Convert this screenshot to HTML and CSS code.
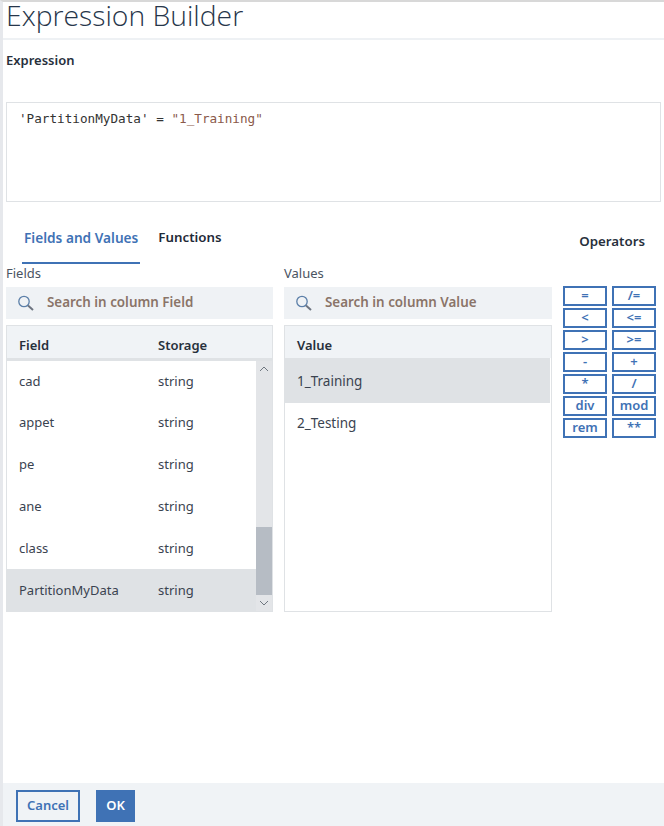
FILE: index.html
```html
<!DOCTYPE html>
<html lang="en">
<head>
  <meta charset="UTF-8" />
  <title>Expression Builder</title>
  <link rel="stylesheet" href="styles.css">
</head>
<body>
  <div class="dialog">
    <header class="title-bar">
      <h1>Expression Builder</h1>
    </header>

    <main class="content">
      <h2 class="section-label">Expression</h2>
      <div class="expression-box">
        <span class="quoted">'PartitionMyData'</span> = <span class="string">"1_Training"</span>
      </div>

      <div class="tab-row">
        <nav class="tabs">
          <button class="tab active">Fields and Values</button>
          <button class="tab">Functions</button>
        </nav>
        <div class="operators-title">Operators</div>
      </div>

      <div class="columns">
        <section class="fields-col">
          <div class="col-label">Fields</div>
          <div class="search">
            <svg class="search-icon" width="18" height="18" viewBox="0 0 18 18"><circle cx="6" cy="7.5" r="5.2" fill="none" stroke="#5b7fa8" stroke-width="1.3"/><path d="M10 11.5L15 16" stroke="#6d7480" stroke-width="2"/></svg>
            <span>Search in column Field</span>
          </div>
          <div class="table-panel">
            <div class="table-head fields-grid">
              <span>Field</span><span>Storage</span>
            </div>
            <div class="table-scroll">
              <div class="rows">
                <div class="row fields-grid"><span>cad</span><span>string</span></div>
                <div class="row fields-grid"><span>appet</span><span>string</span></div>
                <div class="row fields-grid"><span>pe</span><span>string</span></div>
                <div class="row fields-grid"><span>ane</span><span>string</span></div>
                <div class="row fields-grid"><span>class</span><span>string</span></div>
                <div class="row fields-grid selected"><span>PartitionMyData</span><span>string</span></div>
              </div>
              <div class="scrollbar">
                <svg class="arrow" width="16" height="16" viewBox="0 0 16 16"><path d="M4 10l4-4 4 4" fill="none" stroke="#6f7780" stroke-width="1"/></svg>
                <div class="track"><div class="thumb"></div></div>
                <svg class="arrow" width="16" height="16" viewBox="0 0 16 16"><path d="M4 6l4 4 4-4" fill="none" stroke="#6f7780" stroke-width="1"/></svg>
              </div>
            </div>
          </div>
        </section>

        <section class="values-col">
          <div class="col-label">Values</div>
          <div class="search">
            <svg class="search-icon" width="18" height="18" viewBox="0 0 18 18"><circle cx="6" cy="7.5" r="5.2" fill="none" stroke="#5b7fa8" stroke-width="1.3"/><path d="M10 11.5L15 16" stroke="#6d7480" stroke-width="2"/></svg>
            <span>Search in column Value</span>
          </div>
          <div class="table-panel values-panel">
            <div class="table-head values-head"><span>Value</span></div>
            <div class="row value-row selected"><span>1_Training</span></div>
            <div class="row value-row"><span>2_Testing</span></div>
          </div>
        </section>

        <section class="operators">
          <button class="op">=</button><button class="op">/=</button>
          <button class="op">&lt;</button><button class="op">&lt;=</button>
          <button class="op">&gt;</button><button class="op">&gt;=</button>
          <button class="op">-</button><button class="op">+</button>
          <button class="op">*</button><button class="op">/</button>
          <button class="op">div</button><button class="op">mod</button>
          <button class="op">rem</button><button class="op">**</button>
        </section>
      </div>
    </main>

    <footer class="actions">
      <button class="btn btn-secondary">Cancel</button>
      <button class="btn btn-primary">OK</button>
    </footer>
  </div>
</body>
</html>
```

FILE: styles.css
```css
/* General */
html, body {
  margin: 0;
  padding: 0;
}

body {
  font-family: "Noto Sans", "Open Sans", sans-serif;
  color: #1f2a37;
  background-color: #fff;
}

button {
  font-family: inherit;
  cursor: pointer;
}

.dialog {
  height: 826px;
  box-sizing: border-box;
  display: flex;
  flex-direction: column;
  border-top: 2px solid #d8d8d8;
  border-left: 3px solid #e6e8ec;
}

/* Title */
.title-bar {
  height: 36px;
  box-sizing: content-box;
  border-bottom: 2px solid #eef1f4;
  padding-left: 3px;
}

.title-bar h1 {
  margin: 0;
  font-family: "Open Sans", sans-serif;
  font-size: 28.3px;
  font-weight: 300;
  line-height: 27px;
  color: #27364a;
}

/* Main */
.content {
  flex: 1;
  padding: 0 3px;
}

.section-label {
  margin: 11px 0 0;
  font-size: 13px;
  font-weight: 600;
  line-height: 18px;
  color: #27303c;
}

.expression-box {
  margin-top: 33px;
  width: 655px;
  height: 100px;
  box-sizing: border-box;
  border: 1px solid #dfe2e5;
  padding: 7px 12px;
  font-family: "DejaVu Sans Mono", monospace;
  font-size: 12.66px;
  line-height: 18px;
  color: #333;
}

.string {
  color: #8a5a4a;
}

/* Tabs */
.tab-row {
  display: flex;
  justify-content: space-between;
  height: 62px;
}

.tabs {
  display: flex;
  align-items: flex-start;
  margin: 16px 0 0 16px;
  gap: 16px;
}

.tab {
  height: 46px;
  padding: 2px 2px 8px;
  border: none;
  background: none;
  font-size: 13.3px;
  font-weight: 600;
  color: #1f2a37;
  border-bottom: 2px solid transparent;
}

.tab.active {
  font-size: 13.66px;
  color: #3f72b5;
  border-bottom-color: #3f72b5;
}

.operators-title {
  margin: 30px 16px 0 0;
  font-size: 13.3px;
  font-weight: 600;
  line-height: 18px;
  color: #27303c;
}

/* Columns */
.columns {
  display: flex;
  align-items: flex-start;
}

.fields-col {
  width: 267px;
  margin-right: 11px;
}

.values-col {
  width: 268px;
}

.col-label {
  font-size: 13px;
  line-height: 18px;
  color: #4a5462;
  height: 23px;
}

.search {
  height: 32px;
  box-sizing: border-box;
  padding: 0 0 2px 12px;
  display: flex;
  align-items: center;
  gap: 11px;
  background-color: #eff2f5;
  font-size: 13.4px;
  font-weight: 600;
  color: #8a7468;
}

.search-icon {
  margin-top: 2px;
}

/* Tables */
.table-panel {
  margin-top: 6px;
  height: 287px;
  box-sizing: border-box;
  border: 1px solid #dfe2e5;
  display: flex;
  flex-direction: column;
}

.table-head {
  height: 32px;
  background-color: #f0f3f6;
  font-size: 13px;
  font-weight: 600;
  color: #27303c;
  align-items: center;
  flex-shrink: 0;
}

.table-head span {
  padding-top: 6px;
}

.fields-grid {
  display: grid;
  grid-template-columns: 139px 1fr;
  padding-left: 12px;
}

.table-scroll {
  flex: 1;
  display: flex;
  border-top: 3px solid #dfe2e5;
  min-height: 0;
}

.rows {
  flex: 1;
  display: flex;
  flex-direction: column;
  justify-content: flex-end;
}

.row {
  height: 42px;
  padding-bottom: 2px;
  box-sizing: border-box;
  align-items: center;
  font-size: 13px;
  color: #3a4350;
}

.row.selected {
  background-color: #dfe2e5;
  padding-bottom: 0;
}

.scrollbar {
  width: 16px;
  display: flex;
  flex-direction: column;
  background-color: #e3e5e8;
}

.track {
  flex: 1;
  display: flex;
  align-items: flex-end;
}

.thumb {
  width: 16px;
  height: 68px;
  background-color: #b6bcc4;
}

.arrow {
  display: block;
  flex-shrink: 0;
}

.values-head {
  display: flex;
  padding-left: 12px;
}

.value-row {
  display: flex;
  padding-left: 12px;
  height: 42px;
  font-size: 13.5px;
}

.value-row.selected {
  height: 45px;
  margin: 0 1px 0 0;
}

/* Operators */
.operators {
  margin: 22px 0 0 11px;
  display: grid;
  grid-template-columns: 44px 44px;
  grid-auto-rows: 20px;
  column-gap: 5px;
  row-gap: 2px;
}

.op {
  padding: 0 0 2px;
  border: 2px solid #3f72b5;
  background-color: #fff;
  color: #3f72b5;
  font-size: 13px;
  font-weight: 600;
  line-height: 14px;
}

/* Footer */
.actions {
  height: 43px;
  box-sizing: border-box;
  flex-shrink: 0;
  background-color: #f0f3f6;
  padding: 7px 13px 0;
  display: flex;
  align-items: flex-start;
  gap: 16px;
}

.btn {
  height: 32px;
  padding: 0 0 2px;
  font-size: 13px;
  font-weight: 600;
  border: 2px solid #3f72b5;
}

.btn-secondary {
  width: 64px;
  background: none;
  color: #3f72b5;
}

.btn-primary {
  width: 39px;
  background-color: #3f72b5;
  color: #fff;
}
```
